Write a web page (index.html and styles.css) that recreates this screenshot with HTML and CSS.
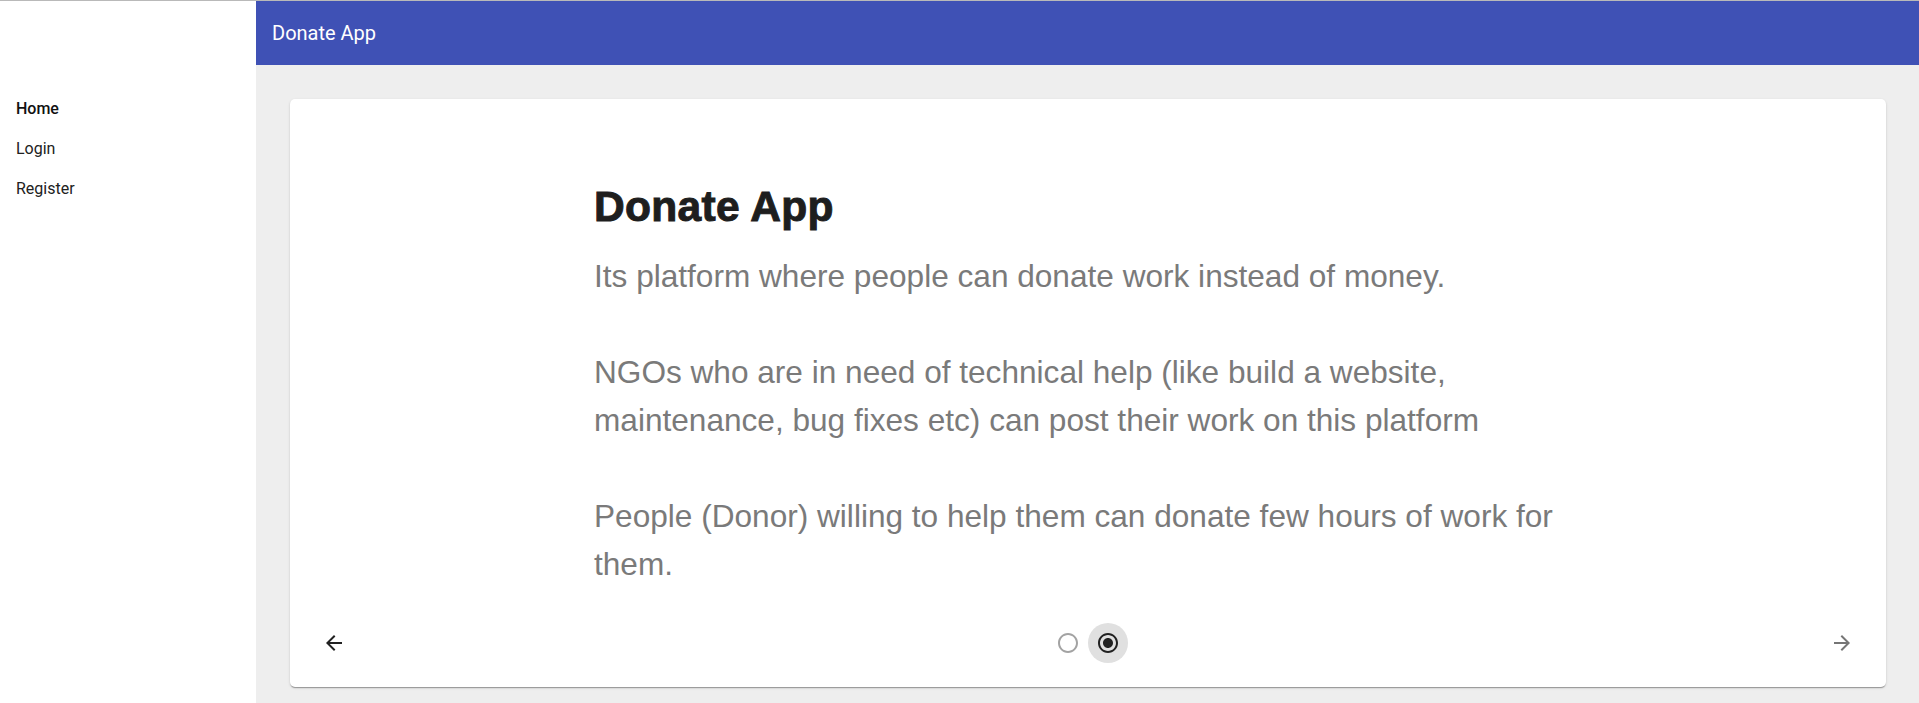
FILE: index.html
```html
<!DOCTYPE html>
<html lang="en">
<head>
<meta charset="utf-8">
<title>Donate App</title>
<link rel="stylesheet" href="styles.css">
</head>
<body>
<div class="app">
  <nav class="sidebar">
    <a class="nav-item active" href="#">Home</a>
    <a class="nav-item" href="#">Login</a>
    <a class="nav-item" href="#">Register</a>
  </nav>
  <div class="main">
    <header class="appbar">Donate App</header>
    <div class="content">
      <section class="card">
        <div class="slide">
          <div class="slide-inner">
            <h1 class="slide-title">Donate App</h1>
            <p class="slide-text">Its platform where people can donate work instead of money.</p>
            <p class="slide-text gap">NGOs who are in need of technical help (like build a website, maintenance, bug fixes etc) can post their work on this platform</p>
            <p class="slide-text gap">People (Donor) willing to help them can donate few hours of work for them.</p>
          </div>
        </div>
        <div class="controls">
          <button class="icon-btn prev" aria-label="Previous">
            <svg viewBox="0 0 24 24" width="24" height="24"><path d="M20 11H7.83l5.59-5.59L12 4l-8 8 8 8 1.41-1.41L7.83 13H20v-2z"/></svg>
          </button>
          <div class="dots">
            <button class="icon-btn dot" aria-label="Slide 1">
              <svg viewBox="0 0 24 24" width="24" height="24"><path d="M12 2C6.48 2 2 6.48 2 12s4.48 10 10 10 10-4.48 10-10S17.52 2 12 2zm0 18c-4.42 0-8-3.58-8-8s3.58-8 8-8 8 3.58 8 8-3.58 8-8 8z"/></svg>
            </button>
            <button class="icon-btn dot current" aria-label="Slide 2">
              <svg viewBox="0 0 24 24" width="24" height="24"><path d="M12 7c-2.76 0-5 2.240-5 5s2.24 5 5 5 5-2.24 5-5-2.24-5-5-5zm0-5C6.48 2 2 6.48 2 12s4.48 10 10 10 10-4.48 10-10S17.52 2 12 2zm0 18c-4.42 0-8-3.58-8-8s3.58-8 8-8 8 3.580 8 8-3.58 8-8 8z"/></svg>
            </button>
          </div>
          <button class="icon-btn next" aria-label="Next">
            <svg viewBox="0 0 24 24" width="24" height="24"><path d="M12 4l-1.41 1.41L16.17 11H4v2h12.17l-5.58 5.59L12 20l8-8z"/></svg>
          </button>
        </div>
      </section>
    </div>
  </div>
</div>
</body>
</html>
```
FILE: styles.css
```css
html, body {
  margin: 0;
  padding: 0;
}

body {
  font-family: Roboto, "Liberation Sans", Arial, sans-serif;
  background: #eeeeee;
  overflow: hidden;
}

.app {
  display: flex;
  border-top: 1px solid #b9b9b9;
  height: 702px;
}

.sidebar {
  width: 256px;
  flex: 0 0 256px;
  background: #ffffff;
  padding-top: 88px;
  display: flex;
  flex-direction: column;
  box-sizing: border-box;
}

.nav-item {
  display: block;
  height: 40px;
  line-height: 40px;
  padding-left: 16px;
  font-size: 16px;
  color: #212121;
  text-decoration: none;
}

.nav-item.active {
  font-weight: 500;
  color: #111111;
}

.main {
  flex: 1;
  display: flex;
  flex-direction: column;
  background: #eeeeee;
  min-width: 0;
}

.appbar {
  height: 64px;
  line-height: 64px;
  background: #3f51b5;
  color: #ffffff;
  font-size: 20px;
  font-weight: 400;
  padding: 0 16px;
}

.content {
  padding: 34px 33px 0 34px;
}

.card {
  background: #ffffff;
  border-radius: 5px;
  height: 588px;
  box-sizing: border-box;
  display: flex;
  flex-direction: column;
  box-shadow: 0 2px 1px -1px rgba(0,0,0,0.2), 0 1px 1px 0 rgba(0,0,0,0.14), 0 1px 3px 0 rgba(0,0,0,0.12);
}

.slide {
  flex: 1;
  padding-top: 84px;
}

.slide-inner {
  width: 988px;
  margin: 0 auto;
}

.slide-title {
  margin: 0;
  font-family: "Liberation Sans", Arial, sans-serif;
  font-size: 42.5px;
  line-height: 48px;
  font-weight: 700;
  letter-spacing: 0.3px;
  color: #1e1e1e;
  -webkit-text-stroke: 1px #1e1e1e;
}

.slide-text {
  margin: 21px 0 0 0;
  font-family: "Liberation Sans", Arial, sans-serif;
  font-size: 31.6px;
  line-height: 48px;
  color: #7a7a7a;
}

.slide-text.gap {
  margin-top: 48px;
}

.controls {
  height: 40px;
  padding: 0 24px;
  margin-bottom: 24px;
  display: grid;
  grid-template-columns: 1fr auto 1fr;
  align-items: center;
}

.icon-btn {
  width: 40px;
  height: 40px;
  padding: 8px;
  border: 0;
  border-radius: 50%;
  background: transparent;
  display: flex;
  align-items: center;
  justify-content: center;
  box-sizing: border-box;
  cursor: pointer;
}

.icon-btn svg {
  display: block;
  fill: currentColor;
}

.prev {
  justify-self: start;
  color: #212121;
}

.next {
  justify-self: end;
  color: #757575;
}

.dots {
  display: flex;
}

.dot {
  color: #a3a3a3;
}

.dot.current {
  color: #212121;
  background: #e0e0e0;
}
```
